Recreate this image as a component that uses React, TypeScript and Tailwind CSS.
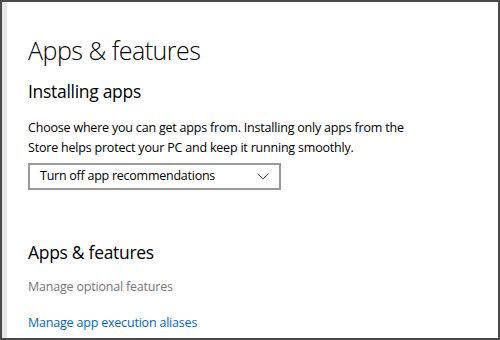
import React from "react";

export default function App() {
  const font = { fontFamily: '"Segoe UI", "Open Sans", "Noto Sans", sans-serif' };
  return (
    <div className="w-[500px] h-[340px] bg-white" style={font}>
      <div className="w-full h-full border-2 border-[#4a4a4a] flex">
        <div className="w-[5px] bg-[#e6e6e6]" />
        <div className="flex-1 pl-[21px] text-black">
          <div className="mt-[30px] text-[25px] font-light leading-[36px] tracking-[-0.5px]">Apps &amp; features</div>
          <div className="mt-[10px] text-[17.5px] leading-[26px] tracking-[-0.3px]">Installing apps</div>
          <div className="mt-[14px] text-[12.5px] leading-[20px] tracking-[-0.2px]">
            Choose where you can get apps from. Installing only apps from the
            <br />
            Store helps protect your PC and keep it running smoothly.
          </div>
          <div className="mt-[5px] w-[253px] h-[27px] border-2 border-[#999999] flex items-center justify-between pl-[10px] pr-[10px] text-[12.5px] tracking-[-0.25px]">
            <span>Turn off app recommendations</span>
            <svg width="12" height="7" viewBox="0 0 12 7" fill="none">
              <path d="M0.5 0.5 L6 6 L11.5 0.5" stroke="#555" strokeWidth="1" />
            </svg>
          </div>
          <div className="mt-[49px] text-[17.5px] leading-[26px] tracking-[-0.3px]">Apps &amp; features</div>
          <div className="mt-[12px] text-[12.5px] leading-[20px] tracking-[-0.2px] text-[#767676]">Manage optional features</div>
          <div className="mt-[16px] text-[12.5px] leading-[20px] tracking-[-0.2px] text-[#0067c0]">Manage app execution aliases</div>
        </div>
      </div>
    </div>
  );
}
